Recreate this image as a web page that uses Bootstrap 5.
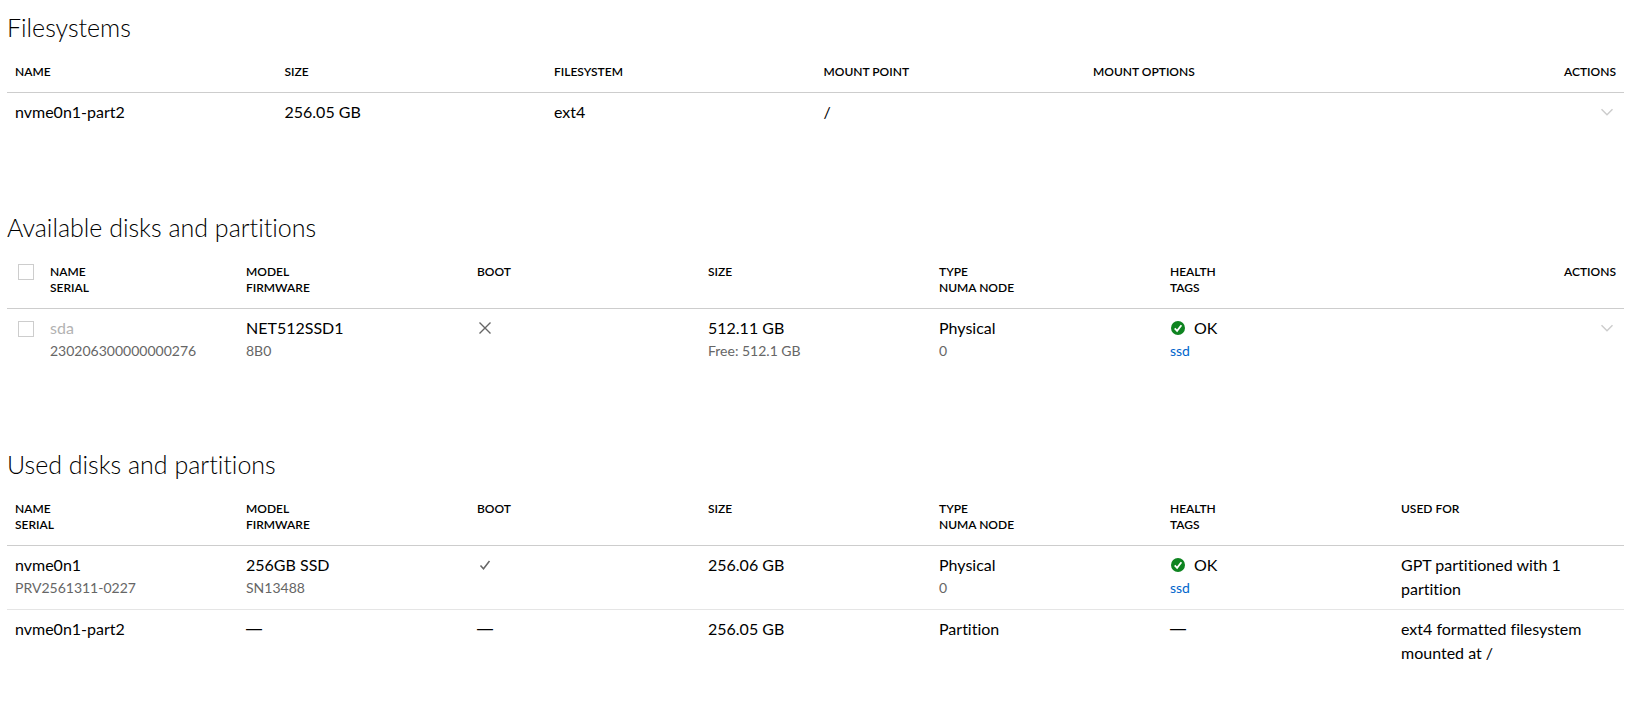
<!DOCTYPE html>
<html lang="en">
<head>
<meta charset="utf-8">
<meta name="viewport" content="width=device-width, initial-scale=1">
<title>Storage</title>
<link href="https://cdn.jsdelivr.net/npm/bootstrap@5.3.0/dist/css/bootstrap.min.css" rel="stylesheet">
<style>
  body { font-family: Lato, "Open Sans", sans-serif; font-size: 16px; line-height: 24px; color: #000; background: #fff; font-variant-ligatures: none; }
  .storage { padding: 11px 13px 24px 7px; gap: 76px; }
  .storage h2 { font-size: 25px; font-weight: 300; line-height: 32px; margin: 0 0 12px; color: #000; }
  .storage-table { --bs-table-color: #000; table-layout: fixed; margin: 0; }
  .storage-table > thead > tr > th { font-size: 12px; line-height: 16px; font-weight: 600; text-transform: uppercase; padding: 9px 8px 12px; border-bottom: 1px solid #cdcdcd; vertical-align: top; }
  .storage-table > tbody > tr > td { padding: 7px 8px 8px; border-bottom: 1px solid #e5e5e5; }
  .storage-table > tbody > tr:last-child > td { border-bottom: 0; }
  .sub { font-size: 14px; line-height: 22px; padding-bottom: 2px; color: #666; }
  .sub a { color: #06c; text-decoration: none; }
  .pick { gap: 16px; padding-left: 3px; }
  .pick .form-check-input { width: 16px; height: 16px; margin: 0; border: 1px solid #cdcdcd; border-radius: 0; flex: none; opacity: 1; }
  tbody .pick .form-check-input { margin-top: 5px; }
  .pick-name { color: #b2b2b2; }
  .glyph { width: 16px; height: 16px; display: block; }
  .icon-line { height: 24px; gap: 8px; }
  .menu-toggle { height: 24px; padding: 0; border: 0; background: none; margin-left: auto; }
  .fs-row > td { height: 42px; }
  .none { font-family: "Liberation Sans", sans-serif; }
</style>
</head>
<body>
<main class="storage d-flex flex-column">
  <section>
    <h2>Filesystems</h2>
    <table class="table storage-table">
      <thead><tr><th>Name</th><th>Size</th><th>Filesystem</th><th>Mount point</th><th>Mount options</th><th class="text-end">Actions</th></tr></thead>
      <tbody><tr class="fs-row">
        <td>nvme0n1-part2</td><td>256.05 GB</td><td>ext4</td><td>/</td><td></td>
        <td><button type="button" class="menu-toggle d-flex align-items-center" aria-label="Filesystem actions"><svg class="glyph" viewBox="0 0 16 16" fill="none" stroke="#cdcdcd" stroke-width="1.5"><path d="M1.5 5.2 7 10.7l5.5-5.5"/></svg></button></td>
      </tr></tbody>
    </table>
  </section>

  <section>
    <h2>Available disks and partitions</h2>
    <table class="table storage-table">
      <thead><tr>
        <th><div class="pick d-flex"><input class="form-check-input" type="checkbox" id="all" aria-label="Select all disks"><label for="all">Name<br>Serial</label></div></th>
        <th>Model<br>Firmware</th><th>Boot</th><th>Size</th><th>Type<br>NUMA node</th><th>Health<br>Tags</th><th class="text-end">Actions</th>
      </tr></thead>
      <tbody><tr>
        <td><div class="pick d-flex"><input class="form-check-input" type="checkbox" id="sda"><div><label class="pick-name d-block" for="sda">sda</label><div class="sub">230206300000000276</div></div></div></td>
        <td>NET512SSD1<div class="sub">8B0</div></td>
        <td><div class="icon-line d-flex align-items-center"><svg class="glyph" viewBox="0 0 16 16" fill="none" stroke="#666" stroke-width="1.4" role="img" aria-label="No"><path d="m2.5 2.5 11 11m0-11-11 11"/></svg></div></td>
        <td>512.11 GB<div class="sub">Free: 512.1 GB</div></td>
        <td>Physical<div class="sub">0</div></td>
        <td><div class="icon-line d-flex align-items-center"><svg class="glyph" viewBox="0 0 16 16"><circle cx="8" cy="8" r="7" fill="#0e8420"/><path d="m4.7 8.3 2.4 2.5 4.3-5.6" fill="none" stroke="#fff" stroke-width="1.8"/></svg><span>OK</span></div><div class="sub"><a href="#ssd">ssd</a></div></td>
        <td><button type="button" class="menu-toggle d-flex align-items-center" aria-label="Disk actions"><svg class="glyph" viewBox="0 0 16 16" fill="none" stroke="#cdcdcd" stroke-width="1.5"><path d="M1.5 5.2 7 10.7l5.5-5.5"/></svg></button></td>
      </tr></tbody>
    </table>
  </section>

  <section>
    <h2>Used disks and partitions</h2>
    <table class="table storage-table">
      <thead><tr>
        <th>Name<br>Serial</th><th>Model<br>Firmware</th><th>Boot</th><th>Size</th><th>Type<br>NUMA node</th><th>Health<br>Tags</th><th>Used for</th>
      </tr></thead>
      <tbody>
        <tr>
          <td>nvme0n1<div class="sub">PRV2561311-0227</div></td>
          <td>256GB SSD<div class="sub">SN13488</div></td>
          <td><div class="icon-line d-flex align-items-center"><svg class="glyph" viewBox="0 0 16 16" fill="none" stroke="#666" stroke-width="1.5" role="img" aria-label="Yes"><path d="m3.5 8.5 3 3.3 6-7.8"/></svg></div></td>
          <td>256.06 GB</td>
          <td>Physical<div class="sub">0</div></td>
          <td><div class="icon-line d-flex align-items-center"><svg class="glyph" viewBox="0 0 16 16"><circle cx="8" cy="8" r="7" fill="#0e8420"/><path d="m4.7 8.3 2.4 2.5 4.3-5.6" fill="none" stroke="#fff" stroke-width="1.8"/></svg><span>OK</span></div><div class="sub"><a href="#ssd">ssd</a></div></td>
          <td>GPT partitioned with 1 partition</td>
        </tr>
        <tr>
          <td>nvme0n1-part2</td><td class="none">—</td><td class="none">—</td><td>256.05 GB</td><td>Partition</td><td class="none">—</td><td>ext4 formatted filesystem mounted at /</td>
        </tr>
      </tbody>
    </table>
  </section>
</main>
<script src="https://cdn.jsdelivr.net/npm/bootstrap@5.3.0/dist/js/bootstrap.bundle.min.js"></script>
</body>
</html>
